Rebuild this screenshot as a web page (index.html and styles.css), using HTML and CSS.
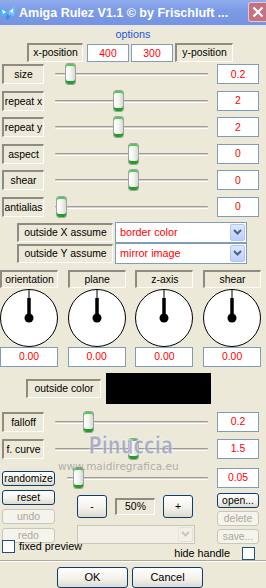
FILE: index.html
```html
<!DOCTYPE html>
<html>
<head>
  <meta charset="utf-8">
  <title>Amiga Rulez V1.1</title>
  <link rel="stylesheet" href="styles.css">
</head>
<body>
<div class="win">

  <div class="titlebar">
    <svg class="appicon" width="16" height="16" viewBox="0 0 16 16">
      <path d="M0 2 L7 6 L7.5 9 L1 12 Z" fill="#49b2f6"/>
      <path d="M15 1 L9 5.5 L8 9 L14 11 Z" fill="#6cc8ff"/>
      <path d="M2 4.5 L6 7 L3 9 Z" fill="#fff"/>
      <path d="M13 3.5 L10 6.5 L12.5 8 Z" fill="#fff"/>
      <path d="M5.5 12.5 L7.5 9 L10 12.5 L7.5 15 Z" fill="#2f93e6"/>
    </svg>
    <span class="title">Amiga Rulez V1.1 © by Frischluft ...</span>
    <span class="close">
      <svg width="12" height="12" viewBox="0 0 12 12"><path d="M1.5 1.5 L10.5 10.5 M10.5 1.5 L1.5 10.5" stroke="#fff" stroke-width="2.2"/></svg>
    </span>
  </div>

  <div class="options">options</div>

  <div class="xyrow">
    <div class="lbl xlbl">x-position</div>
    <div class="val xval">400</div>
    <div class="val xval">300</div>
    <div class="lbl ylbl">y-position</div>
  </div>

  <div class="sliders">
    <div class="srow"><div class="lbl">size</div><div class="slider"><div class="track"></div><div class="thumb" style="left:21px"></div></div><div class="val">0.2</div></div>
    <div class="srow"><div class="lbl">repeat x</div><div class="slider"><div class="track"></div><div class="thumb" style="left:69px"></div></div><div class="val">2</div></div>
    <div class="srow"><div class="lbl">repeat y</div><div class="slider"><div class="track"></div><div class="thumb" style="left:69px"></div></div><div class="val">2</div></div>
    <div class="srow"><div class="lbl">aspect</div><div class="slider"><div class="track"></div><div class="thumb" style="left:84px"></div></div><div class="val">0</div></div>
    <div class="srow"><div class="lbl">shear</div><div class="slider"><div class="track"></div><div class="thumb" style="left:84px"></div></div><div class="val">0</div></div>
    <div class="srow"><div class="lbl">antialias</div><div class="slider"><div class="track"></div><div class="thumb" style="left:12px"></div></div><div class="val">0</div></div>
  </div>

  <div class="assume">
    <div class="arow"><div class="lbl alb">outside X assume</div><div class="sel">border color<span class="drop"><svg width="9" height="6" viewBox="0 0 9 6"><path d="M1 1 L4.5 4.5 L8 1" fill="none" stroke="#4d6185" stroke-width="2"/></svg></span></div></div>
    <div class="arow"><div class="lbl alb">outside Y assume</div><div class="sel">mirror image<span class="drop"><svg width="9" height="6" viewBox="0 0 9 6"><path d="M1 1 L4.5 4.5 L8 1" fill="none" stroke="#4d6185" stroke-width="2"/></svg></span></div></div>
  </div>

  <div class="dials">
    <div class="dial">
      <div class="lbl dlbl">orientation</div>
      <svg class="knob" width="58" height="58" viewBox="0 0 58 58"><circle cx="29" cy="29" r="28.5" fill="#fff" stroke="#000"/><path d="M29 1 V29" stroke="#000"/><path d="M29 9 V29" stroke="#000" stroke-width="3.5"/><circle cx="29" cy="29" r="4.5"/></svg>
      <div class="val dval">0.00</div>
    </div>
    <div class="dial">
      <div class="lbl dlbl">plane</div>
      <svg class="knob" width="58" height="58" viewBox="0 0 58 58"><circle cx="29" cy="29" r="28.5" fill="#fff" stroke="#000"/><path d="M29 1 V29" stroke="#000"/><path d="M29 9 V29" stroke="#000" stroke-width="3.5"/><circle cx="29" cy="29" r="4.5"/></svg>
      <div class="val dval">0.00</div>
    </div>
    <div class="dial">
      <div class="lbl dlbl">z-axis</div>
      <svg class="knob" width="58" height="58" viewBox="0 0 58 58"><circle cx="29" cy="29" r="28.5" fill="#fff" stroke="#000"/><path d="M29 1 V29" stroke="#000"/><path d="M29 9 V29" stroke="#000" stroke-width="3.5"/><circle cx="29" cy="29" r="4.5"/></svg>
      <div class="val dval">0.00</div>
    </div>
    <div class="dial">
      <div class="lbl dlbl">shear</div>
      <svg class="knob" width="58" height="58" viewBox="0 0 58 58"><circle cx="29" cy="29" r="28.5" fill="#fff" stroke="#000"/><path d="M29 1 V29" stroke="#000"/><path d="M29 9 V29" stroke="#000" stroke-width="3.5"/><circle cx="29" cy="29" r="4.5"/></svg>
      <div class="val dval">0.00</div>
    </div>
  </div>

  <div class="ocrow">
    <div class="lbl oclbl">outside color</div>
    <div class="swatch"></div>
  </div>

  <div class="sliders sliders2">
    <div class="srow"><div class="lbl">falloff</div><div class="slider"><div class="track"></div><div class="thumb" style="left:39px"></div></div><div class="val">0.2</div></div>
    <div class="srow"><div class="lbl">f. curve</div><div class="slider"><div class="track"></div><div class="thumb" style="left:84px"></div></div><div class="val">1.5</div></div>
  </div>

  <div class="lower">
    <div class="lcol">
      <div class="btn rnd">randomize</div>
      <div class="btn">reset</div>
      <div class="btn off">undo</div>
      <div class="btn off">redo</div>
    </div>
    <div class="mcol">
      <div class="slider rslider"><div class="track"></div><div class="thumb" style="left:6px"></div></div>
      <div class="zoomrow">
        <div class="btn zb">-</div>
        <div class="pct">50%</div>
        <div class="btn zb">+</div>
      </div>
      <div class="combo"><span class="drop off"><svg width="9" height="6" viewBox="0 0 9 6"><path d="M1 1 L4.5 4.5 L8 1" fill="none" stroke="#c9c7ba" stroke-width="2"/></svg></span></div>
    </div>
    <div class="rcol">
      <div class="val">0.05</div>
      <div class="btn">open...</div>
      <div class="btn off">delete</div>
      <div class="btn off">save...</div>
    </div>
  </div>

  <div class="checks">
    <label class="chk fixed"><span class="box"></span>fixed preview</label>
    <label class="chk hide">hide handle<span class="box"></span></label>
  </div>

  <div class="sep"></div>

  <div class="okrow">
    <div class="btn big">OK</div>
    <div class="btn big">Cancel</div>
  </div>

  <div class="mark">Pinuccia</div>
  <div class="mark2">www.maidiregrafica.eu</div>
</div>
</body>
</html>
```

FILE: styles.css
```css
body{margin:0;background:#ece9d8;color:#000;font:10.4px "Liberation Sans",Arial,sans-serif;}
.win{width:266px;height:588px;overflow:hidden;position:relative;}

/* title bar */
.titlebar{height:25px;display:flex;align-items:center;background:linear-gradient(#90acee,#7d9ce6 40%,#7593df);border-bottom:2px solid #e4e6f2;}
.appicon{margin:1px 3px 0 0;flex:none;}
.title{flex:1;color:#fff;font:bold 12.5px "Liberation Sans",Arial,sans-serif;white-space:nowrap;overflow:hidden;}
.close{flex:none;width:17px;height:18px;margin-top:-2px;display:flex;align-items:center;justify-content:center;background:#c4727f;border:1px solid #e9c5cc;border-right:none;border-radius:3px 0 0 3px;}

.options{height:12px;line-height:12px;margin-top:1px;text-align:center;color:#1f55dd;font-size:10.8px;}

/* common boxes */
.lbl{box-sizing:border-box;display:flex;align-items:center;justify-content:center;white-space:nowrap;border-style:solid;border-width:2px 1px 1px 2px;border-color:#8e8c82 #fdfdfb #fdfdfb #8e8c82;}
.val{box-sizing:border-box;display:flex;align-items:center;justify-content:center;background:#fff;border:1px solid #7f9db9;color:#f00;}
.btn{box-sizing:border-box;display:flex;align-items:center;justify-content:center;border:1px solid #0b3c72;border-radius:3px;background:linear-gradient(#fff,#f3f2ec 55%,#dedbd0);white-space:nowrap;}
.btn.off{border-color:#c9c7ba;color:#aca899;background:#f4f3ec;}

.xyrow{display:flex;align-items:center;margin-top:2px;padding-left:27px;height:20px;}
.xlbl{width:56px;height:19px;}
.xval{width:42px;height:18px;margin-left:4px;margin-top:2px;}
.xval+.xval{margin-left:2px;}
.ylbl{width:58px;height:19px;margin-left:2px;}

/* sliders */
.sliders{display:flex;flex-direction:column;gap:6.6px;margin-top:2px;}
.srow{display:flex;align-items:center;height:20px;padding:0 7px 0 2px;}
.srow .lbl{width:42px;height:20px;}
.srow .val{width:42px;height:20px;}
.slider{position:relative;flex:1;height:20px;}
.track{position:absolute;left:11px;right:9px;top:9px;height:1px;border-top:1px solid #9c9b96;border-bottom:1px solid #fff;background:#d6d4ca;border-radius:1px;}
.thumb{position:absolute;top:-1px;box-sizing:border-box;width:11px;height:22px;border:1px solid #9aa3a6;border-radius:3px;background:linear-gradient(90deg,#fff,#f4f4f0 50%,#d9d9d3);box-shadow:inset 0 2px #54c854,inset 0 -3px #21a121;}

/* outside assume */
.assume{margin-top:5px;padding-left:17px;}
.arow{display:flex;align-items:center;height:21px;}
.alb{width:96px;height:19px;}
.sel{box-sizing:border-box;position:relative;width:132px;height:21px;margin-left:2px;padding-left:4px;display:flex;align-items:center;background:#fff;border:1px solid #7f9db9;color:#f00;font-size:10.8px;}
.drop{position:absolute;right:1px;top:1px;bottom:1px;width:15px;box-sizing:border-box;display:flex;align-items:center;justify-content:center;background:linear-gradient(#dde8fd,#bccffa);border:1px solid #b2c6f3;border-radius:2px;}

/* dials */
.dials{display:grid;grid-template-columns:repeat(4,58px);column-gap:9.7px;margin-top:6px;}
.dial{display:flex;flex-direction:column;}
.dlbl{height:18px;}
.knob{display:block;margin-top:1px;}
.dval{height:20px;}

.ocrow{display:flex;align-items:center;gap:5px;margin-top:6px;padding-left:26px;}
.oclbl{width:75px;height:19px;}
.swatch{width:105px;height:31px;background:#000;}

.sliders2{margin-top:8px;}

/* lower block */
.lower{display:flex;margin-top:9px;padding:0 7px 0 2px;}
.lcol{width:53px;display:flex;flex-direction:column;gap:4px;padding-top:3px;}
.lcol .btn{height:15px;}
.mcol{flex:1;margin:0 9px 0 12px;}
.rslider .track{left:0;right:0;}
.zoomrow{display:flex;align-items:center;gap:8px;margin-top:7px;padding-left:10px;}
.zb{width:30px;height:23px;}
.pct{box-sizing:border-box;width:40px;height:17px;display:flex;align-items:center;justify-content:center;border-style:solid;border-width:2px 1px 1px 2px;border-color:#8e8c82 #fdfdfb #fdfdfb #8e8c82;}
.combo{position:relative;box-sizing:border-box;width:118px;height:19px;margin:7px 0 0 10px;border:1px solid #c9c7ba;background:#f1efe6;}
.drop.off{background:#f1efe6;border-color:#e3e1d8;}
.rcol{width:42px;display:flex;flex-direction:column;gap:3px;}
.rcol .val{height:20px;margin-bottom:2px;}
.rcol .btn{height:15px;}

.checks{display:flex;justify-content:space-between;height:20px;margin-top:-4px;padding:0 11px 0 2px;}
.chk{display:flex;align-items:center;gap:4px;font-size:10.8px;}
.chk.fixed{align-self:flex-start;}
.chk.hide{align-self:flex-end;gap:12px;}
.box{box-sizing:border-box;width:13px;height:13px;background:#fff;border:1px solid #1c5180;}

.sep{height:0;border-top:1px solid #aca899;border-bottom:1px solid #fff;}
.okrow{display:flex;gap:4px;margin-top:5px;padding-left:57px;}
.big{width:71px;height:21px;font-size:11px;}

/* watermark */
.mark{position:absolute;left:72px;top:434px;line-height:24px;font:bold 25px/24px "DejaVu Sans",sans-serif;color:rgba(150,154,185,.75);transform:scaleX(.72);-webkit-text-stroke:1px rgba(255,255,255,.6);}
.mark2{position:absolute;left:58px;top:461px;font:10.5px/10px "DejaVu Sans",sans-serif;color:rgba(120,120,130,.55);}
```
